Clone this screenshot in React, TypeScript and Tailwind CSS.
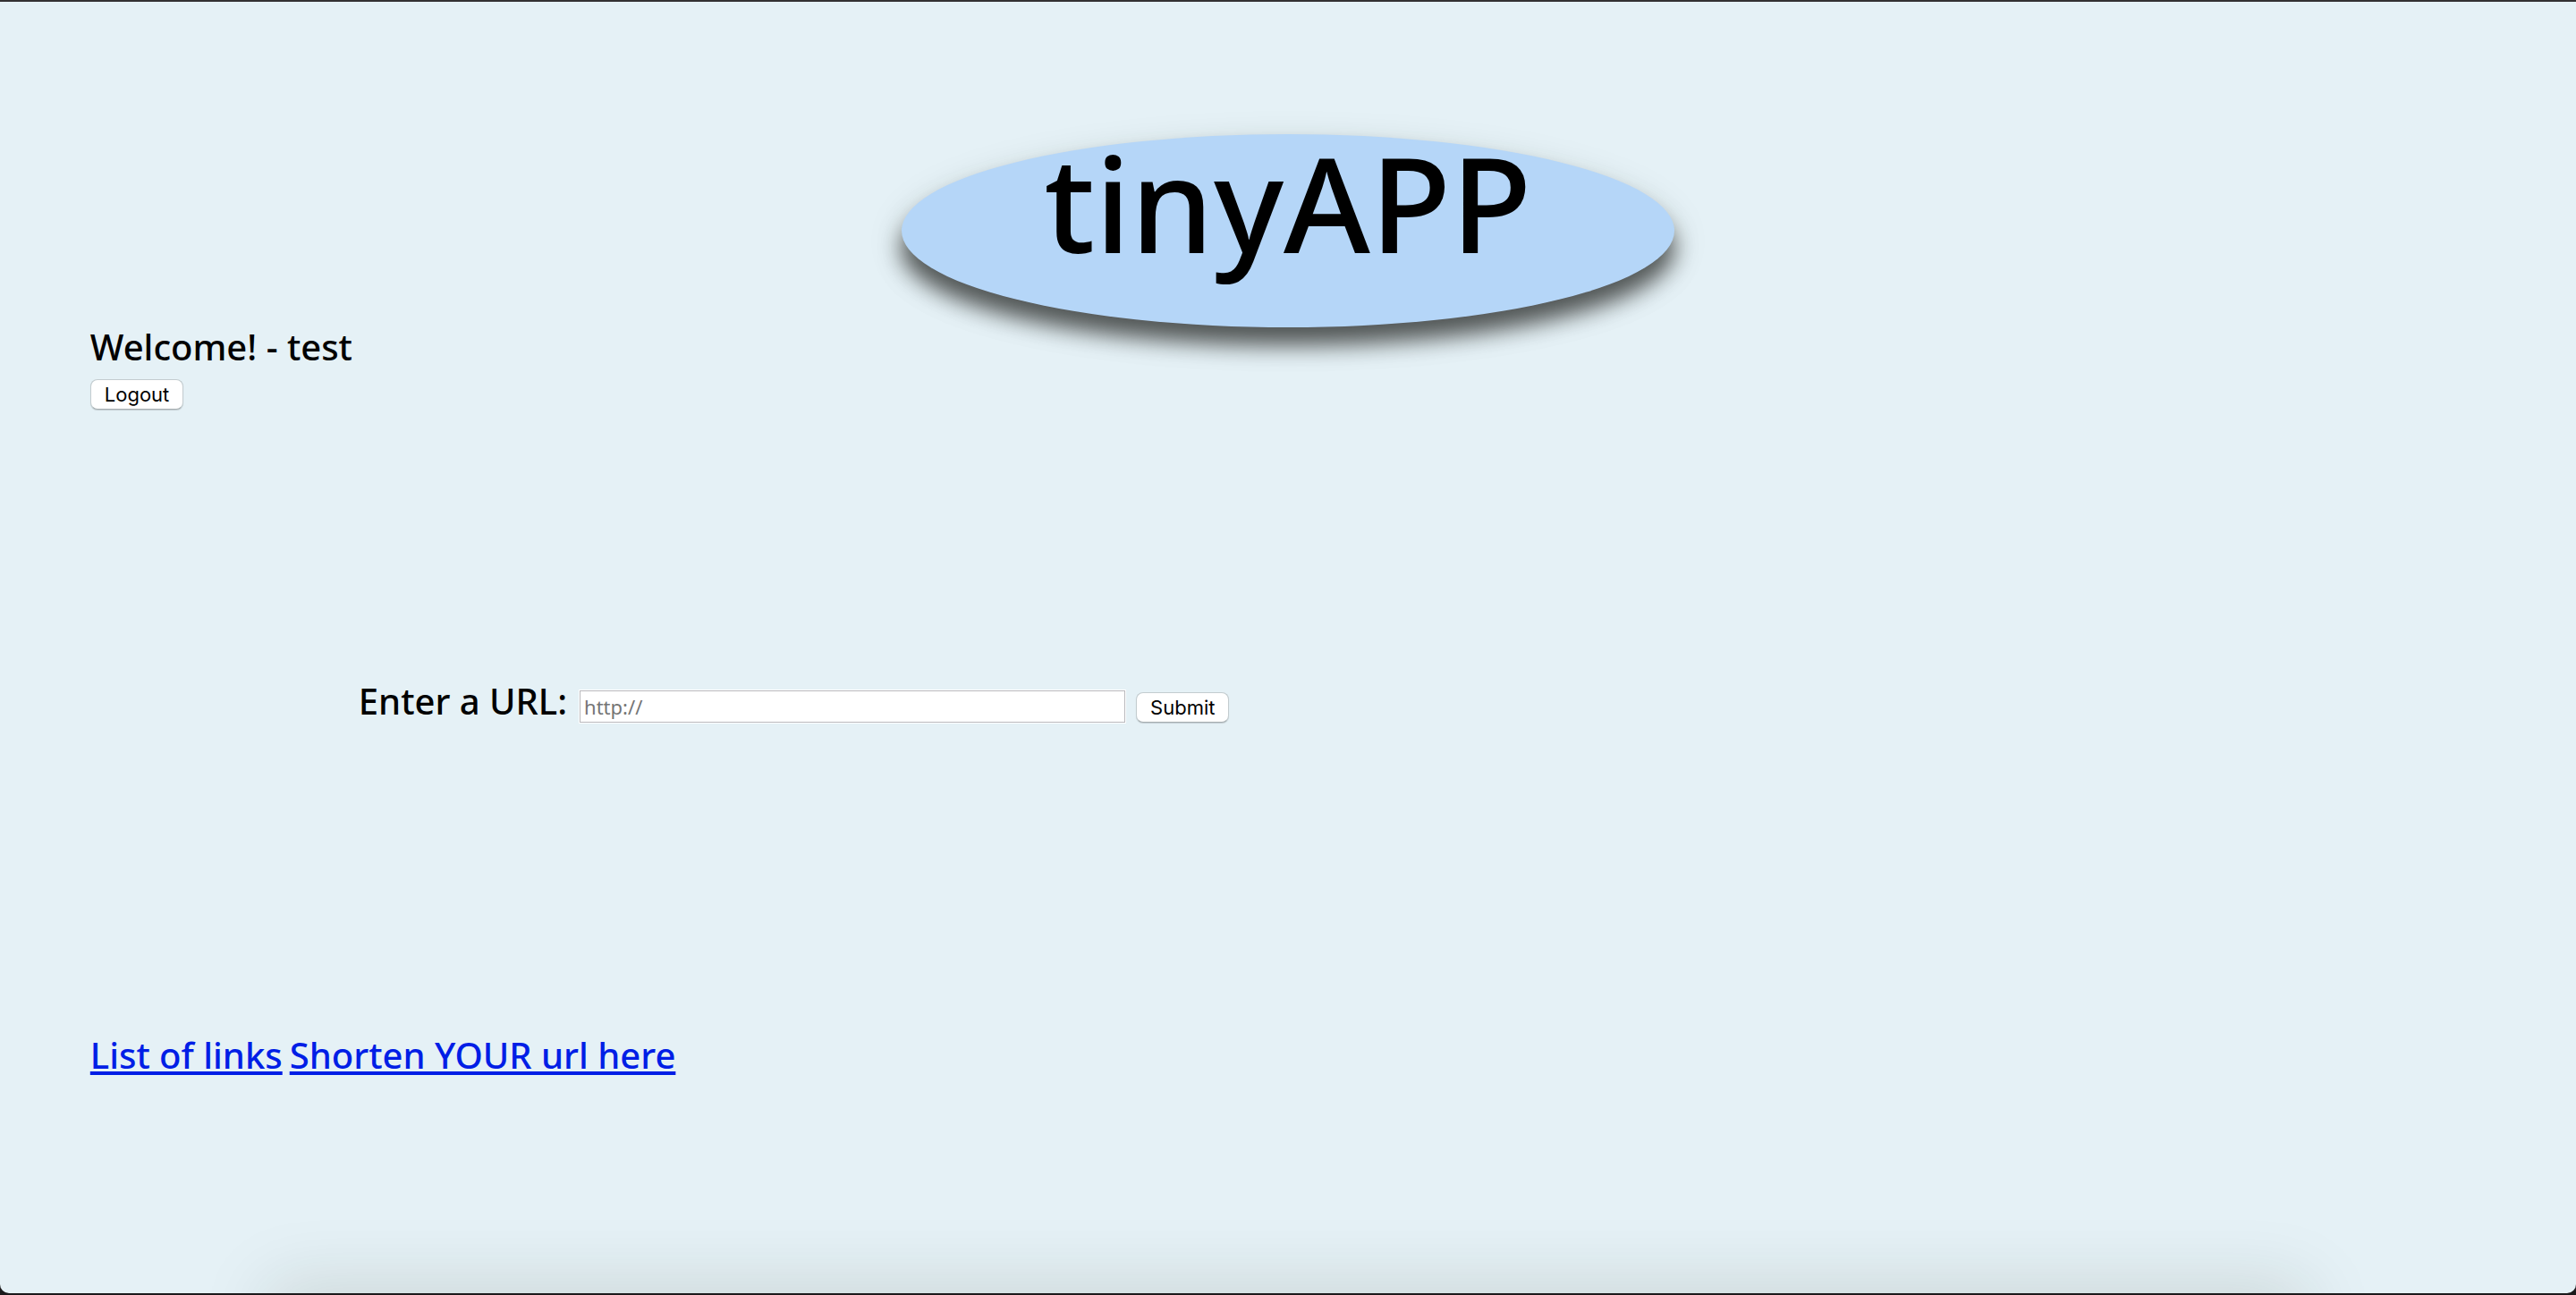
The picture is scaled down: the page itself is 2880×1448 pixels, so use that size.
import React from "react";

const buttonStyle =
  "h-[34px] cursor-pointer rounded-lg border border-[#c3cccf] border-b-[#a5adb0] bg-white px-[15px] font-['Inter',sans-serif] text-[22px] leading-7 font-normal text-black shadow-[0_1px_1px_rgba(0,0,0,0.15)]";

const linkStyle =
  "underline decoration-[4px] underline-offset-[3px] [text-decoration-skip-ink:none]";

function Header() {
  return (
    <header className="flex justify-center">
      <h1 className="h-[216px] w-[30vw] rounded-[50%] bg-[#b5d6f8] text-center text-[148px] leading-[152px] font-medium shadow-[0_20px_24px_rgba(0,0,0,0.6),0_12px_40px_rgba(40,50,0,0.15)]">
        tinyAPP
      </h1>
    </header>
  );
}

function Session({ user }: { user: string }) {
  return (
    <section className="flex flex-col items-start gap-[14px]">
      <p className="leading-[44px]">Welcome! - {user}</p>
      <button type="button" className={buttonStyle}>
        Logout
      </button>
    </section>
  );
}

function ShortenForm() {
  return (
    <form
      className="mt-[302px] ml-[300px] flex items-baseline gap-3"
      onSubmit={(event) => event.preventDefault()}
    >
      <label htmlFor="long-url" className="pr-0.5">
        Enter a URL:
      </label>
      <input
        id="long-url"
        type="text"
        placeholder="http://"
        className="h-9 w-[610px] border border-[#b9b9bd] bg-white px-1 text-[22px] leading-7 font-normal outline-1 outline-white placeholder:text-[#757575]"
      />
      <button type="submit" className={buttonStyle}>
        Submit
      </button>
    </form>
  );
}

function Links() {
  return (
    <nav className="mt-[348px] flex gap-2 text-[#001ee6]">
      <a href="#urls" className={linkStyle}>
        List of links
      </a>
      <a href="#new" className={linkStyle}>
        Shorten YOUR url here
      </a>
    </nav>
  );
}

export default function App() {
  return (
    <div className="min-h-screen bg-[#1c1a1c]">
      <div className="relative flex min-h-screen flex-col overflow-hidden border-t-2 border-[#333133] font-['Noto_Sans',sans-serif] text-[40px] leading-[48px] font-medium text-black">
        <div className="mb-0.5 grow rounded-b-[10px] bg-[#e5f1f6] px-[3.5%] pt-[148px]">
          <Header />
          <Session user="test" />
          <ShortenForm />
          <Links />
        </div>
        <div className="pointer-events-none absolute inset-x-0 bottom-0.5 h-[120px] overflow-hidden">
          <div className="mx-[300px] mt-[120px] h-20 shadow-[0_-10px_80px_rgba(30,35,10,0.13)]" />
        </div>
      </div>
    </div>
  );
}
